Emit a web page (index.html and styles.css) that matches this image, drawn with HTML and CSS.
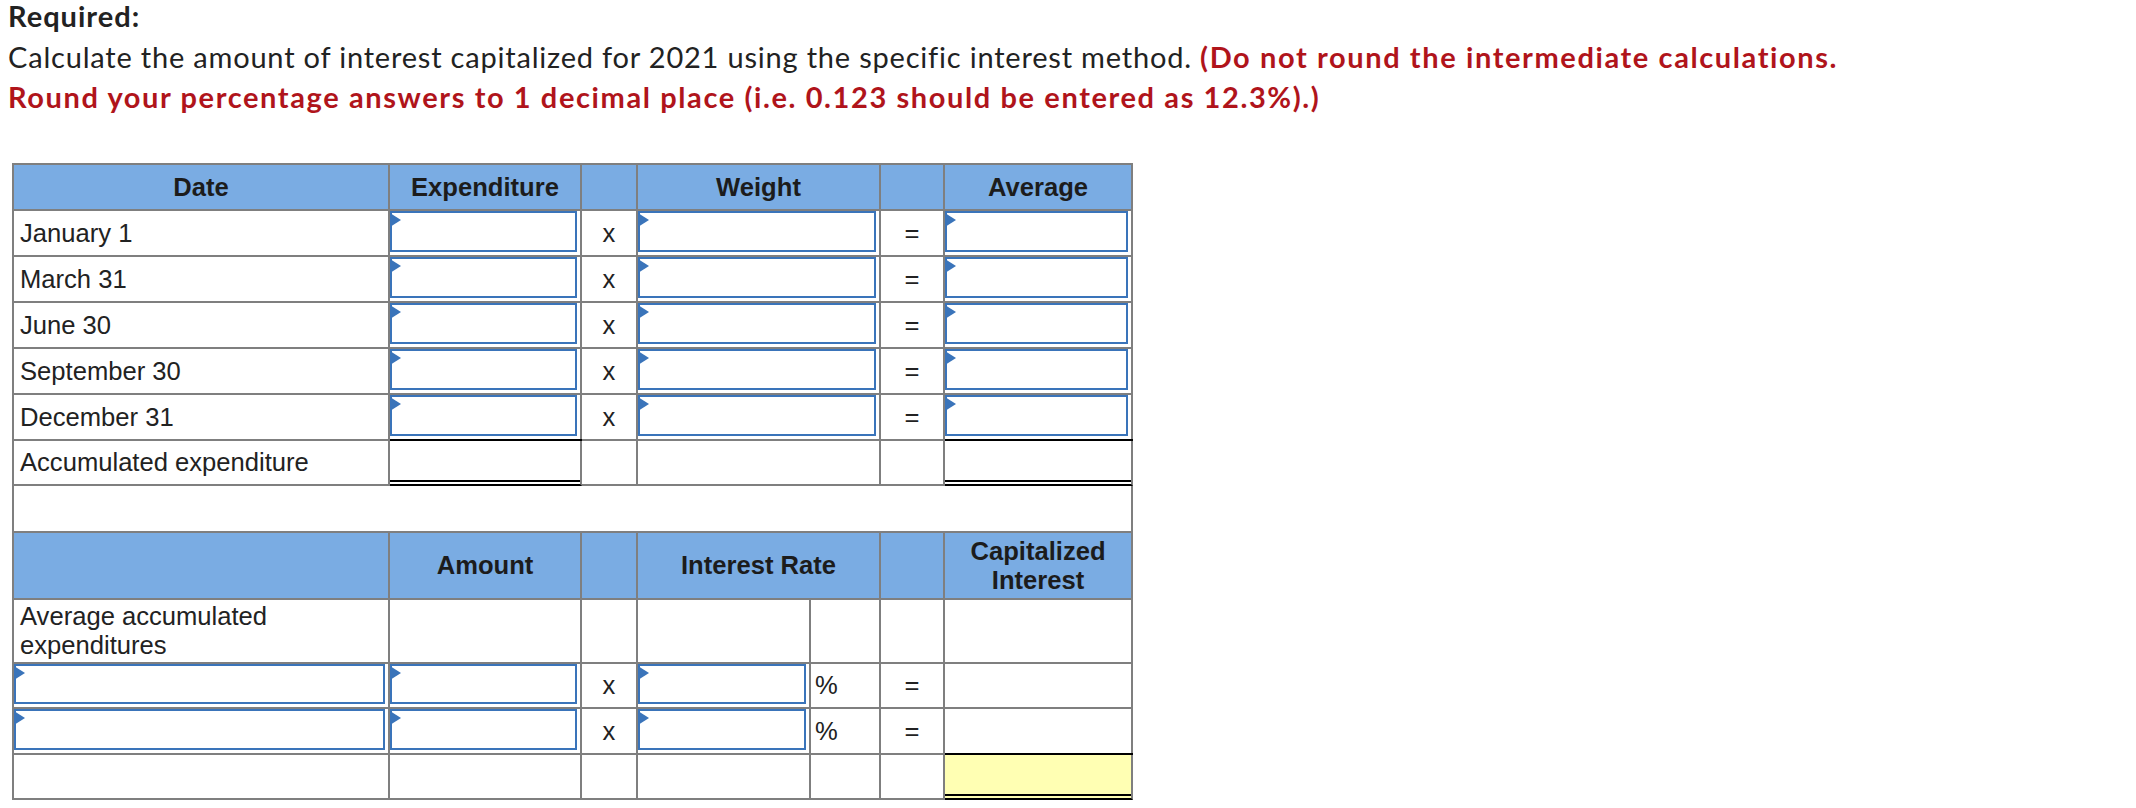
FILE: index.html
```html
<!DOCTYPE html>
<html>
<head>
<meta charset="utf-8">
<link rel="stylesheet" href="styles.css">
</head>
<body>
<div class="page">
  <div class="req">Required:</div>
  <p class="instr">Calculate the amount of interest capitalized for 2021 using the specific interest method. <strong class="warn">(Do not round the intermediate calculations.<br>Round your percentage answers to 1 decimal place (i.e. 0.123 should be entered as 12.3%).)</strong></p>

  <div class="sheet">
    <div class="c hd">Date</div>
    <div class="c hd">Expenditure</div>
    <div class="c hd"></div>
    <div class="c hd span2">Weight</div>
    <div class="c hd"></div>
    <div class="c hd">Average</div>

    <div class="c lbl">January 1</div>
    <div class="c in"><div class="box"></div></div>
    <div class="c op">x</div>
    <div class="c in span2"><div class="box"></div></div>
    <div class="c op">=</div>
    <div class="c in"><div class="box"></div></div>

    <div class="c lbl">March 31</div>
    <div class="c in"><div class="box"></div></div>
    <div class="c op">x</div>
    <div class="c in span2"><div class="box"></div></div>
    <div class="c op">=</div>
    <div class="c in"><div class="box"></div></div>

    <div class="c lbl">June 30</div>
    <div class="c in"><div class="box"></div></div>
    <div class="c op">x</div>
    <div class="c in span2"><div class="box"></div></div>
    <div class="c op">=</div>
    <div class="c in"><div class="box"></div></div>

    <div class="c lbl">September 30</div>
    <div class="c in"><div class="box"></div></div>
    <div class="c op">x</div>
    <div class="c in span2"><div class="box"></div></div>
    <div class="c op">=</div>
    <div class="c in"><div class="box"></div></div>

    <div class="c lbl">December 31</div>
    <div class="c in"><div class="box"></div></div>
    <div class="c op">x</div>
    <div class="c in span2"><div class="box"></div></div>
    <div class="c op">=</div>
    <div class="c in"><div class="box"></div></div>

    <div class="c lbl">Accumulated expenditure</div>
    <div class="c tot"></div>
    <div class="c"></div>
    <div class="c span2"></div>
    <div class="c"></div>
    <div class="c tot"></div>

    <div class="c full"></div>

    <div class="c hd"></div>
    <div class="c hd">Amount</div>
    <div class="c hd"></div>
    <div class="c hd span2">Interest Rate</div>
    <div class="c hd"></div>
    <div class="c hd">Capitalized<br>Interest</div>

    <div class="c lbl">Average accumulated expenditures</div>
    <div class="c"></div>
    <div class="c"></div>
    <div class="c"></div>
    <div class="c"></div>
    <div class="c"></div>
    <div class="c"></div>

    <div class="c in"><div class="box"></div></div>
    <div class="c in"><div class="box"></div></div>
    <div class="c op">x</div>
    <div class="c in"><div class="box"></div></div>
    <div class="c pct">%</div>
    <div class="c op">=</div>
    <div class="c"></div>

    <div class="c in"><div class="box"></div></div>
    <div class="c in"><div class="box"></div></div>
    <div class="c op">x</div>
    <div class="c in"><div class="box"></div></div>
    <div class="c pct">%</div>
    <div class="c op">=</div>
    <div class="c"></div>

    <div class="c"></div>
    <div class="c"></div>
    <div class="c"></div>
    <div class="c"></div>
    <div class="c"></div>
    <div class="c"></div>
    <div class="c tot yel"></div>
  </div>
</div>
</body>
</html>
```

FILE: styles.css
```css
html, body {
  margin: 0;
  padding: 0;
  background: #fff;
}

.page {
  padding: 0 0 0 8px;
  font-family: Lato, "Open Sans", sans-serif;
  color: #222;
}

.req {
  font-size: 29px;
  line-height: 32px;
  font-weight: bold;
  letter-spacing: 1px;
  color: #222;
}

.instr {
  margin: 5px 0 0 0;
  font-size: 29px;
  line-height: 40px;
  letter-spacing: 0.8px;
}

.warn {
  color: #b0141b;
  font-weight: bold;
  letter-spacing: 1.6px;
}

.sheet {
  display: grid;
  grid-template-columns: 376px 192px 56px 173px 70px 64px 188px;
  grid-template-rows: repeat(6, 46px) 45px 47px 67px 64px 45px 46px 45px;
  width: max-content;
  margin: 46px 0 0 4px;
  border-left: 2px solid #7f7f7f;
  border-top: 2px solid #7f7f7f;
  font-family: "Liberation Sans", Arial, sans-serif;
  font-size: 25.6px;
  letter-spacing: 0;
  color: #222;
}

.c {
  display: flex;
  align-items: center;
  min-width: 0;
  background: #fff;
  border-right: 2px solid #7f7f7f;
  border-bottom: 2px solid #7f7f7f;
}

.span2 {
  grid-column: span 2;
}

.full {
  grid-column: span 7;
}

.hd {
  background: #7aace3;
  justify-content: center;
  text-align: center;
  font-weight: bold;
  line-height: 29px;
  color: #1c1c1c;
}

.lbl {
  padding-left: 6px;
  line-height: 29px;
}

.op {
  justify-content: center;
}

.pct {
  padding-left: 4px;
}

.in {
  align-items: stretch;
  padding: 0 3px 3px 0;
}

.box {
  flex: 1;
  position: relative;
  border: 2px solid #3a74ba;
}

.box::before {
  content: "";
  position: absolute;
  left: -2px;
  top: 0;
  border-left: 11px solid #3a74ba;
  border-top: 7px solid transparent;
  border-bottom: 7px solid transparent;
}

.tot {
  border-bottom-color: #000;
  box-shadow: 0 -2px 0 #000, inset 0 -2px 0 #fff, inset 0 -4px 0 #000;
}

.yel {
  background: #ffffb3;
  box-shadow: 0 -2px 0 #000, inset 0 -2px 0 #ffffb3, inset 0 -4px 0 #000;
}
```
